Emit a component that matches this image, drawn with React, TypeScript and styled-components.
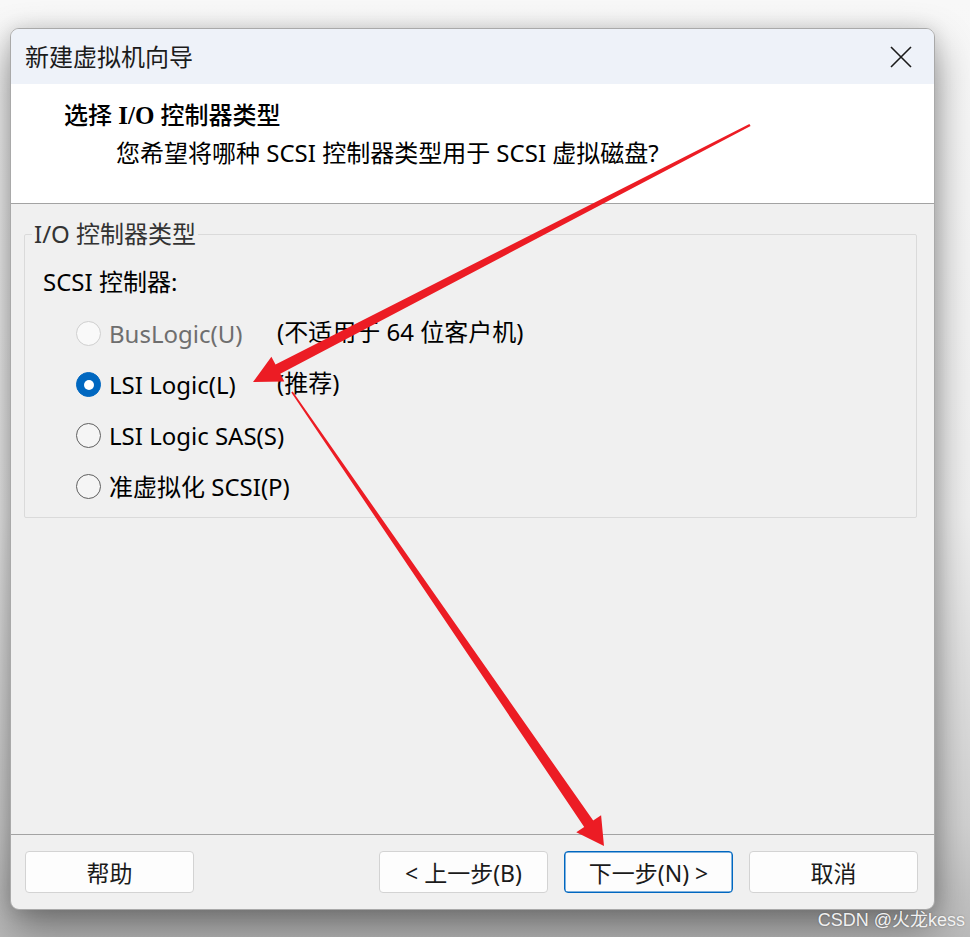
import React from "react";
import styled, { createGlobalStyle } from "styled-components";

const GlobalStyle = createGlobalStyle`
  html, body { margin: 0; padding: 0; }
  body {
    background: #f7f7f7;
    font-family: "Noto Sans", "Noto Sans CJK SC", sans-serif;
    color: #1a1a1a;
  }
`;

const Stage = styled.div`
  position: relative;
  width: 970px;
  height: 937px;
  box-sizing: border-box;
  padding: 28px 0 0 10px;
  overflow: hidden;
  background: linear-gradient(180deg, #f8f8f8 0%, #f0f0f0 55%, #d2d2d2 88%, #bababa 100%);
`;

const Dialog = styled.div`
  width: 925px;
  height: 882px;
  box-sizing: border-box;
  border: 1px solid #a9a9a9;
  border-radius: 9px;
  overflow: hidden;
  display: flex;
  flex-direction: column;
  background: #f0f0f0;
  box-shadow: 0 18px 40px rgba(0, 0, 0, 0.42), 0 0 18px rgba(0, 0, 0, 0.12);
`;

const TitleBar = styled.div`
  height: 55px;
  flex: none;
  display: flex;
  align-items: center;
  justify-content: space-between;
  padding: 0 21px 0 14px;
  background: #eef2f9;
`;

const TitleText = styled.div`
  font-size: 24px;
  line-height: 30px;
  color: #1b1b1b;
`;

const CloseButton = styled.button`
  width: 24px;
  height: 24px;
  padding: 0;
  border: 0;
  background: transparent;
  display: flex;
  align-items: center;
  justify-content: center;
`;

const HeaderPane = styled.div`
  height: 120px;
  flex: none;
  box-sizing: border-box;
  background: #ffffff;
  border-bottom: 1px solid #a3a3a3;
  padding: 16px 0 0 53px;
`;

const Heading = styled.div`
  font-size: 24px;
  line-height: 30px;
  font-weight: 500;
  color: #000;
`;

const SerifBold = styled.span`
  font-family: "Liberation Serif", "Noto Sans CJK SC", serif;
  font-weight: 700;
  font-size: 25px;
`;

const SubTitle = styled.div`
  margin: 7px 0 0 52px;
  font-size: 24px;
  line-height: 30px;
  color: #000;
`;

const Body = styled.div`
  flex: 1;
  padding: 18px 17px 0 13px;
`;

const GroupBox = styled.fieldset`
  margin: 0;
  padding: 0 0 5px 0;
  min-width: 0;
  border: 1px solid #dadada;
  border-radius: 2px;
`;

const GroupLegend = styled.legend`
  margin-left: 7px;
  padding: 0 2px;
  font-size: 24px;
  line-height: 24px;
  color: #333;
`;

const ControllerLabel = styled.div`
  margin: 21px 0 0 18px;
  font-size: 24px;
  line-height: 30px;
  color: #000;
`;

const OptionGrid = styled.div`
  margin-top: 11px;
  padding-left: 51px;
  display: grid;
  grid-template-columns: 201px 1fr;
  grid-auto-rows: 51px;
  align-items: center;
`;

const OptionLabel = styled.label<{ $disabled?: boolean }>`
  display: flex;
  align-items: center;
  gap: 8px;
  font-size: 24px;
  line-height: 30px;
  white-space: nowrap;
  color: ${(p) => (p.$disabled ? "#6e6e6e" : "#000")};
`;

const RadioCircle = styled.span<{ $checked?: boolean; $disabled?: boolean }>`
  width: 25px;
  height: 25px;
  flex: none;
  box-sizing: border-box;
  border-radius: 50%;
  display: flex;
  align-items: center;
  justify-content: center;
  background: ${(p) => (p.$checked ? "#0067c0" : p.$disabled ? "#f9f9f9" : "#f5f5f5")};
  border: 1.5px solid
    ${(p) => (p.$checked ? "#0067c0" : p.$disabled ? "#cfcfcf" : "#5f5f5f")};

  &::after {
    content: "";
    display: ${(p) => (p.$checked ? "block" : "none")};
    width: 10px;
    height: 10px;
    border-radius: 50%;
    background: #ffffff;
  }
`;

const Note = styled.div`
  font-size: 24px;
  line-height: 30px;
  color: #000;
  white-space: nowrap;
  margin-top: -4px;
`;

const Footer = styled.div`
  height: 75px;
  flex: none;
  box-sizing: border-box;
  border-top: 1px solid #a3a3a3;
  padding: 16px 16px 0 14px;
  display: flex;
  align-items: flex-start;
  gap: 16px;
`;

const Spacer = styled.div`
  flex: 1;
`;

const DialogButton = styled.button<{ $primary?: boolean }>`
  width: 169px;
  height: 42px;
  box-sizing: border-box;
  border-radius: 4px;
  background: #fdfdfd;
  border: 1px solid ${(p) => (p.$primary ? "#0067c0" : "#d3d3d3")};
  box-shadow: ${(p) => (p.$primary ? "inset 0 0 0 0.5px #0067c0" : "none")};
  font-family: "Noto Sans", "Noto Sans CJK SC", sans-serif;
  font-size: 23px;
  color: #1a1a1a;
  padding: 0;
`;

const Overlay = styled.svg`
  position: absolute;
  left: 0;
  top: 0;
  pointer-events: none;
`;

const Watermark = styled.div`
  position: absolute;
  right: 5px;
  bottom: 6px;
  font-family: "Liberation Sans", "Noto Sans CJK SC", sans-serif;
  font-size: 18px;
  color: rgba(250, 250, 250, 0.95);
  text-shadow: 0 0 2px rgba(0, 0, 0, 0.3);
`;

type Pt = [number, number];

function arrowPoints(s: Pt, t: Pt, L: number, H: number, w0: number, w1: number): string {
  const dx = t[0] - s[0];
  const dy = t[1] - s[1];
  const len = Math.hypot(dx, dy);
  const ux = dx / len;
  const uy = dy / len;
  const nx = uy;
  const ny = -ux;
  const bx = t[0] - L * ux;
  const by = t[1] - L * uy;
  const pts: Pt[] = [
    [s[0] + w0 * nx, s[1] + w0 * ny],
    [bx + w1 * nx, by + w1 * ny],
    [bx + H * nx, by + H * ny],
    t,
    [bx - H * nx, by - H * ny],
    [bx - w1 * nx, by - w1 * ny],
    [s[0] - w0 * nx, s[1] - w0 * ny],
  ];
  return pts.map((p) => `${p[0].toFixed(1)},${p[1].toFixed(1)}`).join(" ");
}

const options = [
  { label: "BusLogic(U)", note: "(不适用于 64 位客户机)", disabled: true },
  { label: "LSI Logic(L)", note: "(推荐)", checked: true },
  { label: "LSI Logic SAS(S)" },
  { label: "准虚拟化 SCSI(P)" },
];

export default function App() {
  return (
    <Stage>
      <GlobalStyle />
      <Dialog>
        <TitleBar>
          <TitleText>新建虚拟机向导</TitleText>
          <CloseButton aria-label="关闭">
            <svg width="22" height="22" viewBox="0 0 22 22">
              <path d="M1 1 L21 21 M21 1 L1 21" stroke="#1a1a1a" strokeWidth="1.6" fill="none" />
            </svg>
          </CloseButton>
        </TitleBar>
        <HeaderPane>
          <Heading>
            选择 <SerifBold>I/O</SerifBold> 控制器类型
          </Heading>
          <SubTitle>您希望将哪种 SCSI 控制器类型用于 SCSI 虚拟磁盘?</SubTitle>
        </HeaderPane>
        <Body>
          <GroupBox>
            <GroupLegend>I/O 控制器类型</GroupLegend>
            <ControllerLabel>SCSI 控制器:</ControllerLabel>
            <OptionGrid>
              {options.map((o) => (
                <React.Fragment key={o.label}>
                  <OptionLabel $disabled={o.disabled}>
                    <RadioCircle $checked={o.checked} $disabled={o.disabled} />
                    {o.label}
                  </OptionLabel>
                  <Note>{o.note ?? ""}</Note>
                </React.Fragment>
              ))}
            </OptionGrid>
          </GroupBox>
        </Body>
        <Footer>
          <DialogButton>帮助</DialogButton>
          <Spacer />
          <DialogButton>&lt; 上一步(B)</DialogButton>
          <DialogButton $primary>下一步(N) &gt;</DialogButton>
          <DialogButton>取消</DialogButton>
        </Footer>
      </Dialog>
      <Overlay width="970" height="937" viewBox="0 0 970 937">
        <polygon points={arrowPoints([750, 125], [253, 382], 28, 14, 1.2, 5.2)} fill="#ec1c24" />
        <polygon points={arrowPoints([292, 392], [604, 846], 27, 15, 0.8, 5.5)} fill="#ec1c24" />
      </Overlay>
      <Watermark>CSDN @火龙kess</Watermark>
    </Stage>
  );
}
